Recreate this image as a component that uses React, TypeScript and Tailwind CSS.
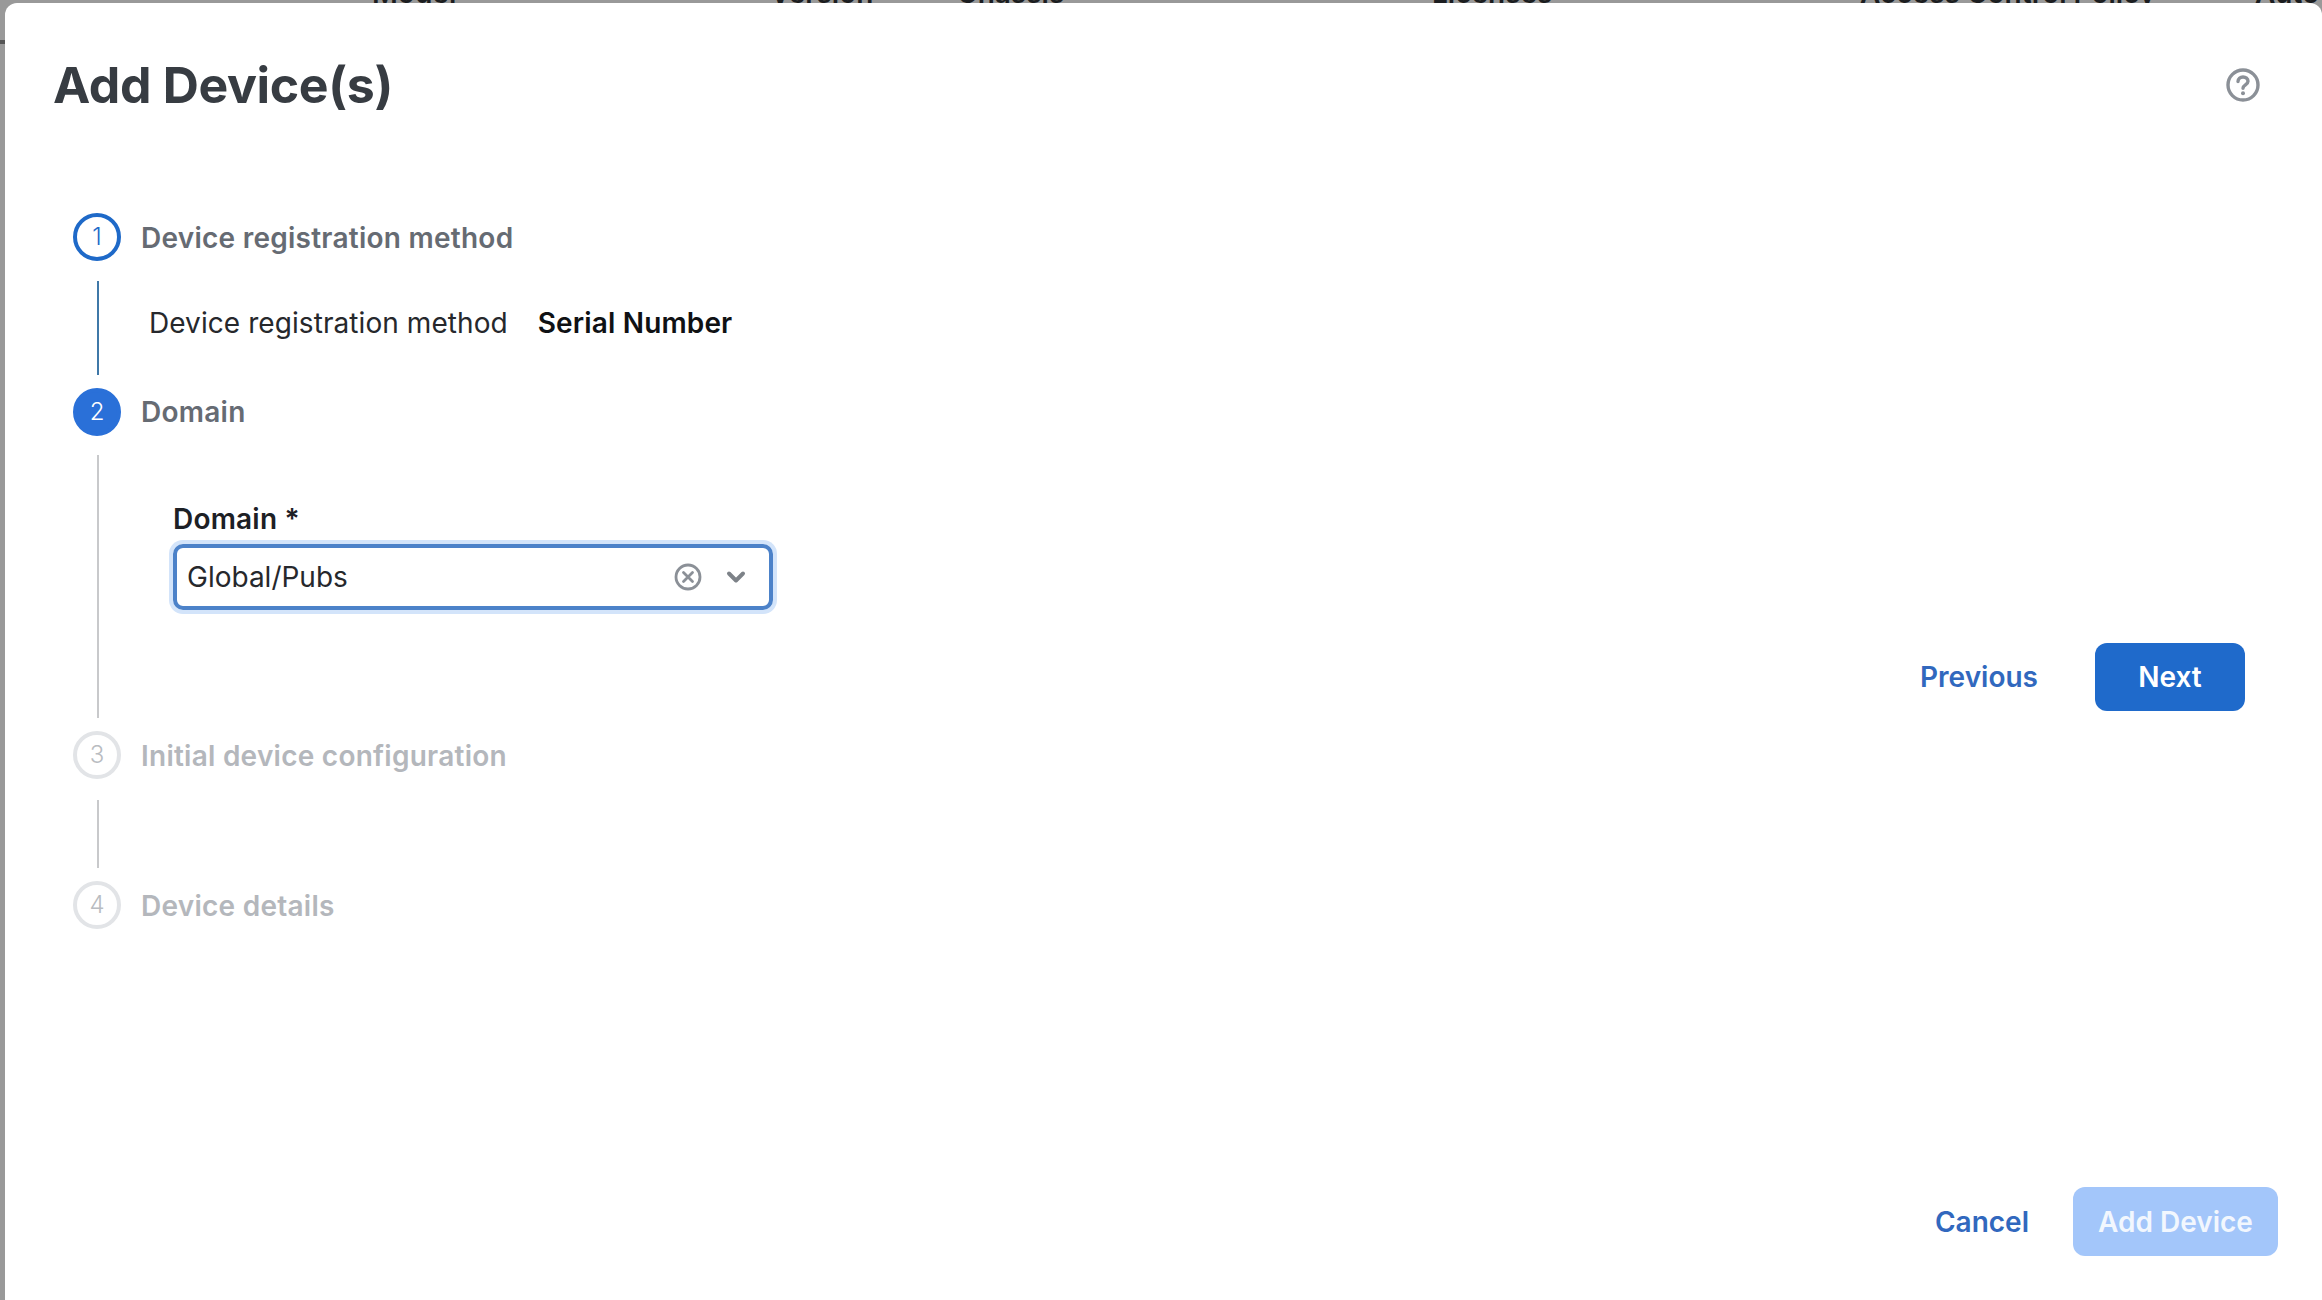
import { ChevronDown } from "lucide-react";

const backdropColumns = [
  { label: "Model", width: "w-[398px]" },
  { label: "Version", width: "w-[187px]" },
  { label: "Chassis", width: "w-[475px]" },
  { label: "Licenses", width: "w-[428px]" },
  { label: "Access Control Policy", width: "w-[395px]" },
  { label: "Auto", width: "w-[70px]" },
];

function StepCircle({ n, state }: { n: number; state: "done" | "active" | "off" }) {
  const look =
    state === "done"
      ? "border-[#1e69c8] text-[#1e69c8] bg-white"
      : state === "active"
        ? "border-[#2a70d8] bg-[#2a70d8] text-white"
        : "border-[#e2e4e7] text-[#b9bcc1] bg-white";
  return (
    <div className={`flex h-12 w-12 shrink-0 items-center justify-center rounded-full border-[4px] text-[24px] font-light ${look}`}>
      {n}
    </div>
  );
}

function StepHeader({ n, label, state }: { n: number; label: string; state: "done" | "active" | "off" }) {
  return (
    <div className="flex h-12 items-center gap-5">
      <StepCircle n={n} state={state} />
      <span
        className={`text-[28px] font-semibold tracking-[0.25px] ${n === 2 ? "" : "pt-[2px]"} ${
          state === "off" ? "text-[#b4b7bc]" : "text-[#666b73]"
        }`}
      >
        {label}
      </span>
    </div>
  );
}

export default function App() {
  return (
    <div className="flex h-[1300px] w-full flex-col overflow-hidden bg-[#999999] font-['Inter',sans-serif]">
      {/* table header peeking out behind the modal */}
      <div className="flex h-[3px] items-end overflow-hidden pl-[372px]">
        {backdropColumns.map((c) => (
          <div key={c.label} className={`${c.width} shrink-0 whitespace-nowrap text-[28px] font-semibold leading-[20px] text-[#1b1d20]`}>
            {c.label}
          </div>
        ))}
      </div>

      <div className="relative ml-[5px] flex flex-1 flex-col rounded-t-[12px] bg-white">
        {/* sliver of the page behind */}
        <div className="absolute -left-[5px] top-[37px] h-1 w-[5px] bg-[#555555]" />

        <div className="flex h-[164px] items-start justify-between pl-[48px] pr-[62px] pt-[49px]">
          <h1 className="text-[50px] font-bold leading-[66px] tracking-[-0.35px] text-[#373c42]">Add Device(s)</h1>
          <svg viewBox="0 0 34 34" className="mt-4 h-[34px] w-[34px]" fill="none" stroke="#8b9097" strokeWidth="3.4">
            <circle cx="17" cy="17" r="15" />
            <path d="M12 13.6c0-2.8 2.2-4.6 5-4.6s5 1.7 5 4.2c0 3.6-5 3.6-5 7" strokeLinecap="round" />
            <circle cx="17" cy="25.2" r="2" fill="#8b9097" stroke="none" />
          </svg>
        </div>

        <div className="pl-[68px] pr-[77px]">
          <div className="mt-[46px]">
            <StepHeader n={1} label="Device registration method" state="done" />
          </div>
          <div className="ml-[24px] mt-5 flex h-[94px] items-center gap-[30px] border-l-2 border-[#3f78a8] pb-[10px] pl-[50px] text-[28px]">
            <span className="font-normal tracking-[0.07px] text-[#26282c]">Device registration method</span>
            <span className="font-semibold tracking-[0.15px] text-[#0f1114]">Serial Number</span>
          </div>

          <div className="mt-[13px]">
            <StepHeader n={2} label="Domain" state="active" />
          </div>
          <div className="ml-[24px] mt-[19px] flex h-[263px] flex-col border-l-2 border-[#c8c9cb] pl-[74px] pt-[44px]">
            <label className="text-[28px] font-semibold leading-[40px] tracking-[0.2px] text-[#1d2025]">Domain *</label>
            <div className="mt-[5px] flex h-[66px] w-[600px] items-center rounded-[10px] border-[4px] border-[#4c82c9] pl-[10px] pr-[19px] text-[28px] text-[#26282c] shadow-[0_0_0_4px_#d3e4fa]">
              <span className="flex-1">Global/Pubs</span>
              <svg viewBox="0 0 28 28" className="h-7 w-7" fill="none" stroke="#8b9097" strokeWidth="2.8">
                <circle cx="14" cy="14" r="12" />
                <path d="M9.5 9.5l9 9M18.5 9.5l-9 9" strokeLinecap="round" />
              </svg>
              <ChevronDown className="ml-[20px] h-7 w-7 text-[#7d8288]" strokeWidth={3.4} />
            </div>
            <div className="mt-[33px] flex items-center justify-end gap-[57px]">
              <span className="text-[28px] font-semibold text-[#3168be]">Previous</span>
              <button className="h-[68px] w-[150px] rounded-[12px] bg-[#1f6acb] text-[28px] font-semibold text-white">Next</button>
            </div>
          </div>

          <div className="mt-[13px]">
            <StepHeader n={3} label="Initial device configuration" state="off" />
          </div>
          <div className="ml-[24px] mt-[21px] h-[68px] border-l-2 border-[#c8c9cb]" />
          <div className="mt-[13px]">
            <StepHeader n={4} label="Device details" state="off" />
          </div>
        </div>

        <div className="mt-auto flex items-center justify-end gap-[44px] pb-[44px] pr-[44px]">
          <span className="text-[28px] font-semibold text-[#3168be]">Cancel</span>
          <button className="h-[69px] w-[205px] rounded-[12px] bg-[#a3c6fa] text-[28px] font-semibold text-[#f2f7fe]">Add Device</button>
        </div>
      </div>
    </div>
  );
}
